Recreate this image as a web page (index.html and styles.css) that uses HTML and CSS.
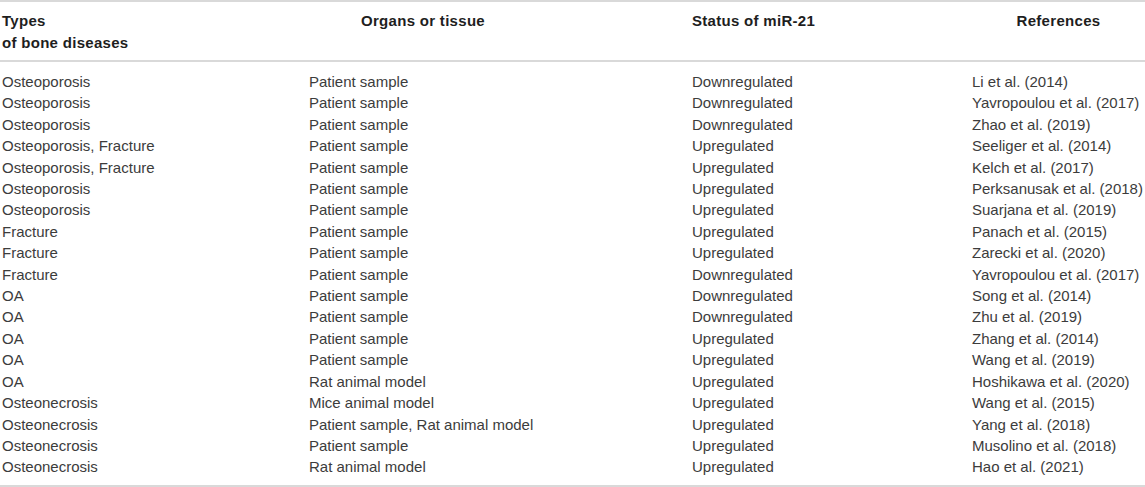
FILE: index.html
```html
<!DOCTYPE html>
<html>
<head>
<meta charset="utf-8">
<link rel="stylesheet" href="styles.css">
</head>
<body>
<div class="tbl">
  <div class="head grid">
    <div class="c1">Types<br>of bone diseases</div>
    <div class="c2 h2">Organs or tissue</div>
    <div class="c3">Status of miR-21</div>
    <div class="c4 h4">References</div>
  </div>
  <div class="body grid">
    <div class="c1">Osteoporosis</div><div>Patient sample</div><div>Downregulated</div><div>Li et al. (2014)</div>
    <div class="c1">Osteoporosis</div><div>Patient sample</div><div>Downregulated</div><div>Yavropoulou et al. (2017)</div>
    <div class="c1">Osteoporosis</div><div>Patient sample</div><div>Downregulated</div><div>Zhao et al. (2019)</div>
    <div class="c1">Osteoporosis, Fracture</div><div>Patient sample</div><div>Upregulated</div><div>Seeliger et al. (2014)</div>
    <div class="c1">Osteoporosis, Fracture</div><div>Patient sample</div><div>Upregulated</div><div>Kelch et al. (2017)</div>
    <div class="c1">Osteoporosis</div><div>Patient sample</div><div>Upregulated</div><div>Perksanusak et al. (2018)</div>
    <div class="c1">Osteoporosis</div><div>Patient sample</div><div>Upregulated</div><div>Suarjana et al. (2019)</div>
    <div class="c1">Fracture</div><div>Patient sample</div><div>Upregulated</div><div>Panach et al. (2015)</div>
    <div class="c1">Fracture</div><div>Patient sample</div><div>Upregulated</div><div>Zarecki et al. (2020)</div>
    <div class="c1">Fracture</div><div>Patient sample</div><div>Downregulated</div><div>Yavropoulou et al. (2017)</div>
    <div class="c1">OA</div><div>Patient sample</div><div>Downregulated</div><div>Song et al. (2014)</div>
    <div class="c1">OA</div><div>Patient sample</div><div>Downregulated</div><div>Zhu et al. (2019)</div>
    <div class="c1">OA</div><div>Patient sample</div><div>Upregulated</div><div>Zhang et al. (2014)</div>
    <div class="c1">OA</div><div>Patient sample</div><div>Upregulated</div><div>Wang et al. (2019)</div>
    <div class="c1">OA</div><div>Rat animal model</div><div>Upregulated</div><div>Hoshikawa et al. (2020)</div>
    <div class="c1">Osteonecrosis</div><div>Mice animal model</div><div>Upregulated</div><div>Wang et al. (2015)</div>
    <div class="c1">Osteonecrosis</div><div>Patient sample, Rat animal model</div><div>Upregulated</div><div>Yang et al. (2018)</div>
    <div class="c1">Osteonecrosis</div><div>Patient sample</div><div>Upregulated</div><div>Musolino et al. (2018)</div>
    <div class="c1">Osteonecrosis</div><div>Rat animal model</div><div>Upregulated</div><div>Hao et al. (2021)</div>
  </div>
</div>
</body>
</html>
```
FILE: styles.css
```css
html, body {
  margin: 0;
  padding: 0;
  background: #ffffff;
}
.tbl {
  width: 1145px;
  font-family: "Liberation Sans", Arial, sans-serif;
  font-size: 15px;
}
.grid {
  display: grid;
  grid-template-columns: 309px 383px 280px 173px;
}
.c1 {
  padding-left: 2px;
}
.head {
  border-top: 2px solid #d9d9d9;
  border-bottom: 2px solid #d9d9d9;
  padding: 8px 0 6px;
  line-height: 22px;
  font-weight: bold;
  letter-spacing: 0.3px;
  color: #1e1e1e;
}
.h2 {
  padding-left: 52px;
}
.h4 {
  text-align: center;
  padding-left: 0;
}
.body {
  padding: 9px 0 7px;
  line-height: 21.4px;
  color: #3c3c3c;
  border-bottom: 2px solid #d9d9d9;
  white-space: nowrap;
}
```
